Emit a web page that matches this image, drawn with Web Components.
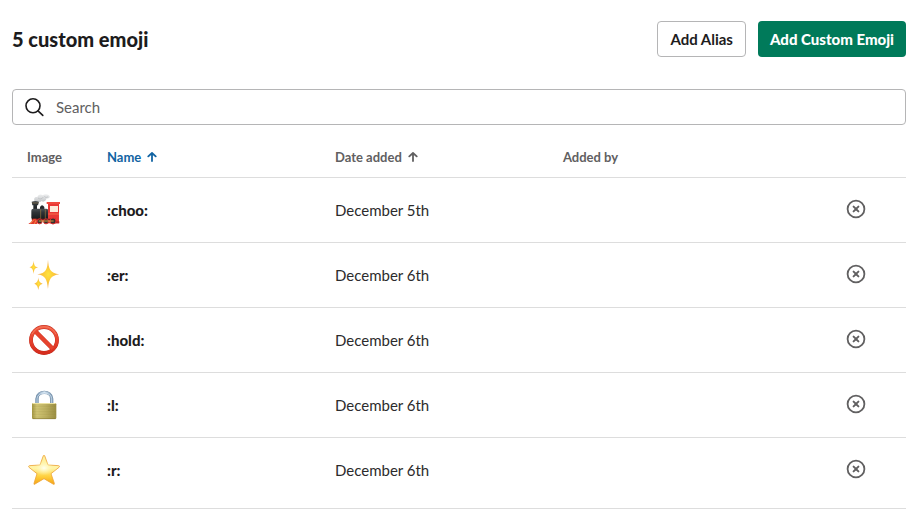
<!DOCTYPE html>
<html lang="en">
<head>
<meta charset="utf-8">
<title>Custom emoji</title>
<style>
  body { margin: 0; background: #fff; color: #1d1c1d; font: 15px/24px Lato, "Open Sans", sans-serif; }
</style>
</head>
<body>
<emoji-page>
  <emoji-header slot="header">
    5 custom emoji
    <action-button slot="actions">Add Alias</action-button>
    <action-button slot="actions" primary>Add Custom Emoji</action-button>
  </emoji-header>
  <search-field slot="search" label="Search"></search-field>
  <emoji-table></emoji-table>
</emoji-page>

<script>
const define = (name, html, setup) => {
  const template = document.createElement('template');
  template.innerHTML = html;
  customElements.define(name, class extends HTMLElement {
    connectedCallback() {
      if (this.shadowRoot) return;
      this.attachShadow({ mode: 'open' }).append(template.content.cloneNode(true));
      if (setup) setup(this, this.shadowRoot);
    }
  });
};

define('emoji-page', `
  <style>
    :host { display: block; }
    main { padding: 21px 15px 16px 12px; display: flex; flex-direction: column; }
    .search { margin-top: 32px; }
    .list { margin-top: 12px; }
  </style>
  <main>
    <slot name="header"></slot>
    <div class="search"><slot name="search"></slot></div>
    <div class="list"><slot></slot></div>
  </main>`);

define('emoji-header', `
  <style>
    :host { display: flex; align-items: center; justify-content: space-between; gap: 12px; }
    h1 { margin: 0; font-size: 20px; line-height: 36px; font-weight: 900; }
    .actions { display: flex; gap: 12px; }
  </style>
  <h1><slot></slot></h1>
  <div class="actions"><slot name="actions"></slot></div>`);

define('action-button', `
  <style>
    :host { display: block; }
    button {
      display: block; height: 36px; padding: 0 12px; box-sizing: border-box;
      font: inherit; font-weight: 700; white-space: nowrap; cursor: pointer;
      color: #1d1c1d; background: #fff; border: 1px solid #b5b5b6; border-radius: 4px;
    }
    :host([primary]) button { font-weight: 900; color: #fff; background: #007a5a; border: 0; }
  </style>
  <button type="button"><slot></slot></button>`);

define('search-field', `
  <style>
    :host { display: block; }
    label {
      display: flex; align-items: center; gap: 12px; height: 36px; padding: 0 12px;
      box-sizing: border-box; border: 1px solid #b5b5b6; border-radius: 4px;
    }
    svg { flex: none; width: 19px; height: 20px; }
    input { flex: 1; min-width: 0; padding: 0; border: 0; outline: 0; background: none; font: inherit; color: inherit; }
    input::placeholder { color: #616061; opacity: 1; }
  </style>
  <label>
    <svg viewBox="0 0 19 20" fill="none" stroke="#1d1c1d" stroke-width="1.6" stroke-linecap="round" aria-hidden="true">
      <circle cx="8" cy="8.800" r="7"/><path d="M13 13.800l4.800 4.600"/>
    </svg>
    <input type="search">
  </label>`, (host, root) => {
  const input = root.querySelector('input');
  input.placeholder = host.getAttribute('label');
  input.setAttribute('aria-label', host.getAttribute('label'));
});

define('sort-arrow', `
  <style>:host { display: inline-block; width: 10px; height: 10px; } svg { display: block; }</style>
  <svg width="10" height="10" viewBox="0 0 10 10" fill="none" stroke="currentColor" stroke-width="1.8" stroke-linecap="round" stroke-linejoin="round" aria-hidden="true">
    <path d="M5 9V1.2M1.300 4.400L5 1l3.700 3.400"/>
  </svg>`);

define('remove-button', `
  <style>
    :host { display: block; }
    button { display: block; margin: 0 0 0 auto; padding: 0; border: 0; background: none; color: #616061; cursor: pointer; }
    svg { display: block; }
  </style>
  <button type="button">
    <svg width="20" height="20" viewBox="0 0 20 20" fill="none" stroke="currentColor" aria-hidden="true">
      <circle cx="10" cy="10" r="8.400" stroke-width="1.8"/>
      <path d="M7.600 7.600l4.800 4.800M12.400 7.600l-4.800 4.800" stroke-width="2" stroke-linecap="round"/>
    </svg>
  </button>`, (host, root) => {
  root.querySelector('button').setAttribute('aria-label', 'Remove ' + host.getAttribute('name'));
});

const drawings = {
  choo: `
    <defs>
      <linearGradient id="b" x1="0" y1="0" x2="0" y2="1"><stop offset="0" stop-color="#4b5156"/><stop offset=".35" stop-color="#2e3337"/><stop offset="1" stop-color="#15191c"/></linearGradient>
      <linearGradient id="s" x1="0" y1="0" x2="0" y2="1"><stop offset="0" stop-color="#eeeff0"/><stop offset="1" stop-color="#c3c6c9"/></linearGradient>
    </defs>
    <path d="M43 47C41 38 46 34 52 37C53 28 63 26 68 31C75 25 86 27 89 34C90 39 85 41 80 40C78 48 70 53 65 48C60 54 54 48 50 51C47 53 43 51 43 47Z" fill="url(#s)"/>
    <path d="M54 39C59 43 66 43 70 36M73 34C76 38 81 38 84 35" fill="none" stroke="#b7babd" stroke-width="2"/>
    <path d="M35 50Q46 46 57 50L54 61H51V77H40V61H37Z" fill="url(#b)"/>
    <path d="M37 54H55" stroke="#a98548" stroke-width="1.5"/>
    <path d="M60 66Q66 55 73 66V75H60Z" fill="#25292c"/>
    <rect x="34" y="71" width="51" height="32" rx="6" fill="url(#b)"/>
    <path d="M62 73V102M76 73V102" stroke="#b98d43" stroke-width="1.5"/>
    <path d="M84 56H117V115H84Z" fill="#e83835"/>
    <path d="M80 51H120V57H80Z" fill="#f0493e"/>
    <path d="M90 63H114V81H90Z" fill="#fdebdc"/>
    <path d="M85 87H117" stroke="#ff8a57" stroke-width="2"/>
    <path d="M34 101H103V107H38Z" fill="#7d201f"/>
    <path d="M25 117Q35 112 39 101H49L52 117Z" fill="#e33a2e"/>
    <path d="M31 116L42 104M43 117L48 106" stroke="#f6b248" stroke-width="2"/>
    <g fill="#34302e" stroke="#d92f2d" stroke-width="3"><circle cx="59" cy="109" r="7.500"/><circle cx="78" cy="109" r="7.500"/><circle cx="99" cy="108" r="9"/></g>
    <path d="M56 108H101" stroke="#f1b34c" stroke-width="2.500"/>
    <path d="M106 115H118V109H109Z" fill="#b92727"/>`,
  er: `
    <defs><radialGradient id="g"><stop offset="0" stop-color="#ffe43d"/><stop offset=".5" stop-color="#fcc839"/><stop offset="1" stop-color="#f3a64a"/></radialGradient></defs>
    <g fill="url(#g)">
      <path d="M84 29C86 56 90 69 118 73C92 77 87 87 84 117C81 88 77 77 52 73C78 69 82 58 84 29Z"/>
      <path d="M41 32C42 45 44 50 54 52C44 55 42 59 41 72C39 59 37 54 28 52C37 49 40 44 41 32Z"/>
      <path d="M55 82C56 94 59 98 68 101C59 104 57 108 55 120C53 108 50 104 43 101C51 98 54 94 55 82Z"/>
    </g>`,
  hold: `
    <defs><linearGradient id="r" x1="0" y1="0" x2="0" y2="1"><stop offset="0" stop-color="#f0583f"/><stop offset=".5" stop-color="#e8432e"/><stop offset="1" stop-color="#d62c1d"/></linearGradient></defs>
    <circle cx="72" cy="75" r="39" fill="none" stroke="#bd2d20" stroke-width="11.500"/>
    <path d="M46 49L98 101" stroke="#c9301f" stroke-width="13"/>
    <circle cx="72" cy="75" r="39" fill="none" stroke="url(#r)" stroke-width="9.500"/>
    <path d="M46 49L98 101" stroke="#e6432e" stroke-width="11"/>
    <path d="M36 58A40 40 0 0 1 108 58" fill="none" stroke="#f88b6c" stroke-width="2"/>`,
  l: `
    <defs>
      <linearGradient id="k" x1="0" y1="0" x2="1" y2="0"><stop offset="0" stop-color="#a39643"/><stop offset=".2" stop-color="#d0c474"/><stop offset=".55" stop-color="#beb162"/><stop offset="1" stop-color="#9a8d42"/></linearGradient>
      <linearGradient id="m" x1="0" y1="0" x2="1" y2="0"><stop offset="0" stop-color="#7896b3"/><stop offset=".5" stop-color="#d9e8f4"/><stop offset="1" stop-color="#819db7"/></linearGradient>
    </defs>
    <path d="M51 72V56C51 31 95 31 95 56V72" fill="none" stroke="#7790a8" stroke-width="10"/>
    <path d="M51 72V56C51 31 95 31 95 56V72" fill="none" stroke="url(#m)" stroke-width="7"/>
    <path d="M51 70V56C51 34 95 34 95 56V70" fill="none" stroke="#dcebf7" stroke-width="2"/>
    <rect x="36" y="69" width="73" height="48" rx="4" fill="url(#k)"/>
    <path d="M38 70.500H107" stroke="#ece2a0" stroke-width="3"/>
    <path d="M38 79H108M38 87H108M38 95H108M38 103H108M38 111H108" stroke="#877b32" stroke-opacity=".2" stroke-width="2"/>
    <path d="M38 116H107" stroke="#857731" stroke-width="2"/>`,
  r: `
    <defs><linearGradient id="y" x1="0" y1="0" x2="0" y2="1"><stop offset="0" stop-color="#fff09b"/><stop offset=".45" stop-color="#fff4a7"/><stop offset=".72" stop-color="#ffd13f"/><stop offset="1" stop-color="#f5a313"/></linearGradient>
    <radialGradient id="w"><stop offset="0" stop-color="#fffff0"/><stop offset="1" stop-color="#fff7ae" stop-opacity="0"/></radialGradient></defs>
    <path d="M70 32Q72 29 74 32L84 60L116 62Q121 63 117 67L93 86L103 115Q104 120 99 117L72 101L45 117Q41 120 42 115L51 86L27 67Q24 63 28 62L60 60Z" fill="url(#y)" stroke="#eda53a" stroke-width="2.500" stroke-linejoin="round"/>
    <ellipse cx="72" cy="69" rx="28" ry="22" fill="url(#w)"/>`
};

define('emoji-glyph', `
  <style>:host { display: block; width: 32px; height: 32px; } svg { display: block; width: 100%; height: 100%; overflow: visible; }</style>
  <svg viewBox="24 27 96 96" aria-hidden="true"></svg>`, (host, root) => {
  root.querySelector('svg').innerHTML = drawings[host.getAttribute('name')];
});

const emoji = [['choo', 'December 5th'], ['er', 'December 6th'], ['hold', 'December 6th'], ['l', 'December 6th'], ['r', 'December 6th']];

define('emoji-table', `
  <style>
    :host { display: block; }
    table { width: 100%; table-layout: fixed; border-collapse: separate; border-spacing: 0; }
    .image { width: 80px; } .wide { width: 25.5%; }
    th, td { box-sizing: border-box; padding: 0 16px; border-bottom: 1px solid #ddd; text-align: left; vertical-align: middle; }
    th:not(:first-child), td:not(:first-child) { padding-left: 15px; }
    thead th { height: 41px; font-size: 13px; line-height: 18px; font-weight: 700; color: #616061; }
    thead th:first-child { padding-left: 15px; }
    thead button { display: flex; align-items: center; gap: 6px; padding: 0; border: 0; background: none; font: inherit; color: inherit; cursor: pointer; }
    thead .sorted { color: #1264a3; }
    tbody th, tbody td { height: 65px; }
    tbody th { font-weight: 900; }
    tbody td { color: #2c2b2c; }
    tbody tr:last-child > * { height: 71px; padding-bottom: 6px; }
    tbody td:last-child { padding-right: 40px; }
    remove-button { padding-bottom: 2px; }
  </style>
  <table>
    <colgroup><col class="image"><col class="wide"><col class="wide"><col class="wide"><col></colgroup>
    <thead><tr>
      <th scope="col">Image</th>
      <th scope="col" aria-sort="ascending"><button type="button" class="sorted">Name<sort-arrow></sort-arrow></button></th>
      <th scope="col"><button type="button">Date added<sort-arrow></sort-arrow></button></th>
      <th scope="col">Added by</th>
      <td></td>
    </tr></thead>
    <tbody></tbody>
  </table>`, (host, root) => {
  root.querySelector('tbody').innerHTML = emoji.map(([name, date]) => `
    <tr>
      <td><emoji-glyph name="${name}"></emoji-glyph></td>
      <th scope="row">:${name}:</th>
      <td>${date}</td>
      <td></td>
      <td><remove-button name="${name}"></remove-button></td>
    </tr>`).join('');
});
</script>
</body>
</html>
